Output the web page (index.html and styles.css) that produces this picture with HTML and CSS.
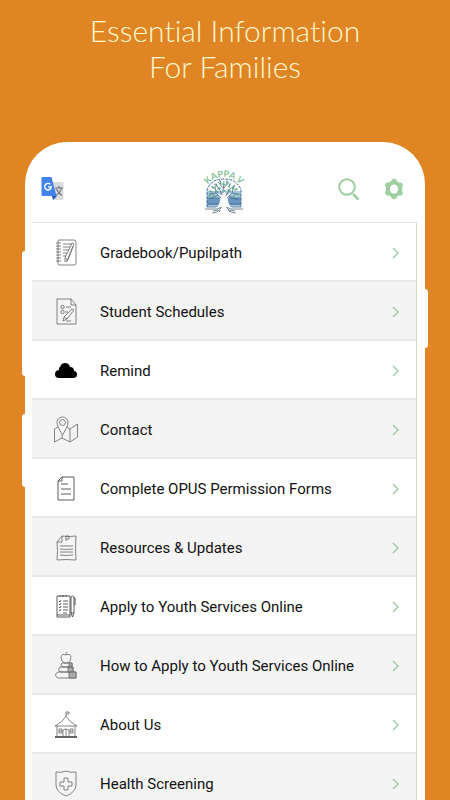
FILE: index.html
```html
<!DOCTYPE html>
<html lang="en">
<head>
    <meta charset="utf-8">
    <meta name="viewport" content="width=device-width, initial-scale=1">
    <title>Essential Information For Families</title>
    <link rel="stylesheet" href="styles.css">
</head>
<body>
    <h1>Essential Information<br>For Families</h1>

    <div class="phone">
        <span class="side-button volume"></span>
        <span class="side-button assistant"></span>
        <span class="side-button power"></span>

        <div class="screen">
            <header class="topbar">
                <button class="translate" aria-label="Translate">
                    <svg width="24" height="26" viewBox="0 0 24 26">
                        <path d="M10 6h11.500q1 0 1 1v16q0 1-1 1h-9z" fill="#dcdcde"/>
                        <path d="M14 12h8M18 10v2M20.500 12q-1 5-6 7.500M15.500 13q1.500 4 5.500 6.500" fill="none" stroke="#6d737b" stroke-width="1.200"/>
                        <path d="M11 20h5l-4 4z" fill="#2b52b4"/>
                        <path d="M1.500 1H10.500L15.500 20H1.500Q.5 20 .5 19V2Q.5 1 1.500 1z" fill="#4384ec"/>
                        <path d="M9.300 8.300A3.300 3.300 0 1 0 10.300 11H7.200" fill="none" stroke="#fff" stroke-width="1.400"/>
                    </svg>
                </button>

                <svg class="logo" width="50" height="60" viewBox="-4 -5 50 60" role="img" aria-label="Kappa V">
                    <path id="arch" d="M2 25A21 21 0 0 1 40 25" fill="none"/>
                    <g transform="translate(0 7)">
                        <path d="M4 20h34v16H4z" fill="#a9c4e0"/>
                        <path d="M4 27h34v7H4z" fill="#6c96c2"/>
                        <path d="M4 36V19Q8 8 21 8T38 19V36" fill="none" stroke="#456d87" stroke-width="1" stroke-dasharray="3 1"/>
                        <path d="M4 36h12M26 36h12M4 33h11M27 33h11M4 27h12M26 27h12" stroke="#426f9d" stroke-width=".8"/>
                        <path d="M13 37q5-4 4-11l-5-4 7 2 2-6 2 6 7-3-5 5q-1 7 4 11z" fill="#fff"/>
                        <path d="M18 27l-5-5-7 1M13 22l-1-7M15 24l-8 4M19 24l-3-7-5-4M20 22l1-12M21 17l5-6M20 17l-5-6M23 25l4-7 5-4M24 27l5-5 7 1M29 22l1-6M26 25l9 4" fill="none" stroke="#345d72" stroke-width=".7"/>
                        <path d="M7 20l2 1M6 25l2-1M9 16l2 1M10 24l1 2M13 13l1 2M15 18l2-1M17 10l1 3M20 13l2 1M24 10v3M27 13l-1 3M25 19l2 1M31 15l-1 3M34 18l-2 1M32 24l-2 2M36 24l-2-1M13 20l2 1M20 19l2 1" stroke="#64a993" stroke-width="1.600" stroke-linecap="round"/>
                        <path d="M2 38h12l5-2M40 38H28l-5-2M18 37l-4 4-5 1M17 39l-1 2M24 37l4 4 5 1M25 39l2 2M15 39l-5 1M27 39l5 1" fill="none" stroke="#577077" stroke-width=".8"/>
                    </g>
                    <text class="logo-text"><textPath href="#arch" startOffset="50%" text-anchor="middle">KAPPA V</textPath></text>
                </svg>

                <div class="actions">
                    <button aria-label="Search">
                        <svg width="24" height="24" viewBox="0 0 24 24" fill="none" stroke="#9dcfa0">
                            <circle cx="10" cy="10" r="7.800" stroke-width="2"/>
                            <path d="M16 17l5.500 5.500" stroke-width="2.500"/>
                        </svg>
                    </button>
                    <button aria-label="Settings">
                        <svg width="24" height="24" viewBox="0 0 24 24">
                            <circle cx="12" cy="12" r="6.200" fill="none" stroke="#9dcfa0" stroke-width="4"/>
                            <g fill="#9dcfa0">
                                <circle cx="12" cy="4.500" r="2.800"/>
                                <circle cx="18" cy="8.200" r="2.800"/>
                                <circle cx="18" cy="15.800" r="2.800"/>
                                <circle cx="12" cy="19.500" r="2.800"/>
                                <circle cx="6" cy="15.800" r="2.800"/>
                                <circle cx="6" cy="8.200" r="2.800"/>
                            </g>
                            <ellipse cx="12" cy="12" rx="4" ry="4.600" fill="#fff"/>
                        </svg>
                    </button>
                </div>
            </header>

            <nav>
                <ul class="menu">
                    <li><a href="#gradebook">
                        <svg class="icon" viewBox="0 0 24 28">
                            <path d="M5 1h15q2 0 2 2v21q0 2-2 2H5q-1 0-1-1V2q0-1 1-1z"/>
                            <path d="M2 4h5M2 7h5M2 10h5M2 13h5M2 16h5M2 19h5M2 22h5M9 5h9M9 8h7M9 11h6M9 14h4M9 17h3"/>
                            <path d="M18 4l2 1-6 16-3 2v-4zM19 7l-6 15M11 19l3 2"/>
                        </svg>
                        <span>Gradebook/Pupilpath</span>
                        <svg class="chevron" viewBox="0 0 8 12"><path d="M1 1l5 5-5 5"/></svg>
                    </a></li>
                    <li><a href="#schedules">
                        <svg class="icon" viewBox="0 0 24 28">
                            <path d="M3 1h14l5 6v19H3zM17 1v6h5"/>
                            <circle cx="8.500" cy="9" r="1.700"/><circle cx="8.500" cy="14" r="1.700"/>
                            <path d="M12 9h5M11 14h3M18 11l2 1-7 9-4 2 1-4zM10 19l3 2M12 23h5"/>
                        </svg>
                        <span>Student Schedules</span>
                        <svg class="chevron" viewBox="0 0 8 12"><path d="M1 1l5 5-5 5"/></svg>
                    </a></li>
                    <li><a href="#remind">
                        <svg class="icon" viewBox="0 0 24 28">
                            <path class="solid" d="M5 21Q1 21 1 17Q1 13.500 5 13Q4.500 10 6.500 9.500Q7 6 11 6Q15 6 16 10Q20 10 20 14Q23 14 23 17.500Q23 21 19 21z"/>
                        </svg>
                        <span>Remind</span>
                        <svg class="chevron" viewBox="0 0 8 12"><path d="M1 1l5 5-5 5"/></svg>
                    </a></li>
                    <li><a href="#contact">
                        <svg class="icon" viewBox="0 0 24 28">
                            <path d="M8.500 19Q3 10 3 6.500A5.500 5.500 0 0 1 14 6.500Q14 10 8.500 19z"/>
                            <circle cx="8.500" cy="6.500" r="3"/>
                            <path d="M4 11l-3.500 2v13L8 22l8 4 7.500-5V8L16 13l-3-2M8 19v3M16 13v13"/>
                        </svg>
                        <span>Contact</span>
                        <svg class="chevron" viewBox="0 0 8 12"><path d="M1 1l5 5-5 5"/></svg>
                    </a></li>
                    <li><a href="#opus">
                        <svg class="icon dark" viewBox="0 0 24 28">
                            <path d="M8 2h12v23H4V6zM8 2v4H4M7 9h7M7 14h10M7 19h10"/>
                        </svg>
                        <span>Complete OPUS Permission Forms</span>
                        <svg class="chevron" viewBox="0 0 8 12"><path d="M1 1l5 5-5 5"/></svg>
                    </a></li>
                    <li><a href="#resources">
                        <svg class="icon" viewBox="0 0 24 28">
                            <path d="M8 2q7 1 14 0-1 12 0 24-10-1-19 0 1-10 0-18l5-6v6H3M6 12h13M6 15q6 1 13 0M6 18h13M6 21q6 1 13 0"/>
                            <path d="M12 7V2h3v3h-3"/>
                        </svg>
                        <span>Resources &amp; Updates</span>
                        <svg class="chevron" viewBox="0 0 8 12"><path d="M1 1l5 5-5 5"/></svg>
                    </a></li>
                    <li><a href="#apply">
                        <svg class="icon dark" viewBox="0 0 24 28">
                            <path d="M3 3h13v21H3zM3 22h13M6 2v2M9 2v2M12 2v2M9 8h5M9 11h5M9 14h5M9 17h5M9 20h4M5 8l1 1 1-2M5 11l1 1 1-2M5 14l1 1 1-2M5 17l1 1 1-2"/>
                            <path d="M17 5q0-2 1.500-2T20 5v15l-1.500 4L17 20zM17 20h3M20 5h1v7"/>
                        </svg>
                        <span>Apply to Youth Services Online</span>
                        <svg class="chevron" viewBox="0 0 8 12"><path d="M1 1l5 5-5 5"/></svg>
                    </a></li>
                    <li><a href="#how-to-apply">
                        <svg class="icon" viewBox="0 0 24 28">
                            <path d="M12 3Q8 1 7 5q0 4 3 6h4q3-2 3-6-1-4-5-2zM12 3q0-2 1-3M8 11h10v4H8q-2-2 0-4M6 15h13v5H6q-3-2 0-5M4 20h18v6H4q-5-3 0-6"/>
                            <path class="shade" d="M15 11h3v4h-3zM14 15h5v5h-5zM15 20h7v6h-7z"/>
                        </svg>
                        <span>How to Apply to Youth Services Online</span>
                        <svg class="chevron" viewBox="0 0 8 12"><path d="M1 1l5 5-5 5"/></svg>
                    </a></li>
                    <li><a href="#about">
                        <svg class="icon" viewBox="0 0 24 28">
                            <path d="M12 5V1h3v2h-3M12 5Q9 11 1 15h22Q15 11 12 5zM3 15v10M21 15v10M9 25v-5q0-2 3-2t3 2v5M12 18v7M5 18h3v4H5zM16 18h3v4h-3zM5 20h3M16 20h3"/>
                            <path class="base" d="M1 26h22"/>
                        </svg>
                        <span>About Us</span>
                        <svg class="chevron" viewBox="0 0 8 12"><path d="M1 1l5 5-5 5"/></svg>
                    </a></li>
                    <li><a href="#health">
                        <svg class="icon" viewBox="0 0 24 28">
                            <path d="M12 1q5 2 10 1v13q0 7-10 11Q2 22 2 15V2q5 1 10-1z"/>
                            <path d="M10 8h4v4h4v4h-4v4h-4v-4H6v-4h4z"/>
                        </svg>
                        <span>Health Screening</span>
                        <svg class="chevron" viewBox="0 0 8 12"><path d="M1 1l5 5-5 5"/></svg>
                    </a></li>
                </ul>
            </nav>
        </div>
    </div>
</body>
</html>
```
FILE: styles.css
```css
* { box-sizing: border-box; }
body { margin: 0; height: 100vh; overflow: hidden; background: #e08524; font-family: Roboto, sans-serif; color: #111; }
h1 { margin: 0; padding: 12px 0 58px; font-family: Lato, sans-serif; font-weight: 300; font-size: 30px; line-height: 36px; font-variant-ligatures: none; text-align: center; color: #fff8cf; }
button { display: block; padding: 0; border: none; background: none; cursor: pointer; }
svg { display: block; flex: none; }

.phone { position: relative; margin: 0 25px; padding: 14px 8px 0 7px; background: #fff; border-radius: 42px 42px 0 0; }
.side-button { position: absolute; width: 6px; background: #fff; border-radius: 3px; }
.volume { left: -3px; top: 109px; height: 125px; }
.assistant { left: -3px; top: 272px; height: 73px; }
.power { right: -3px; top: 147px; height: 59px; }

.topbar { display: grid; grid-template-columns: 1fr auto 1fr; align-items: center; height: 67px; padding: 0 11px 0 9px; border-bottom: 1px solid #e2e2e2; }
.translate { justify-self: start; }
.actions { display: flex; gap: 21px; justify-self: end; }
.logo-text { font-family: Lato, sans-serif; font-weight: 700; font-size: 9px; fill: #87c29b; }

.menu { margin: 0; padding: 0; list-style: none; border-right: 1px solid #ded8cc; }
.menu li { border-bottom: 2px solid #e8e8e8; }
.menu li:nth-child(even) { background: #f4f4f4; }
.menu a { display: flex; align-items: center; gap: 22px; height: 57px; padding: 2px 16px 0 22px; font-size: 15px; color: #111; text-decoration: none; }
.menu span { flex: 1; white-space: nowrap; }
.icon { width: 24px; height: 28px; fill: none; stroke: #666; stroke-width: 0.8; }
.icon.dark { stroke: #333; }
.icon .solid { fill: #000; stroke: none; }
.icon .shade { fill: #aaa; }
.icon .base { stroke: #333; stroke-width: 1.5; }
.chevron { width: 8px; height: 12px; fill: none; stroke: #9cc9a4; stroke-width: 1.4; }
```
